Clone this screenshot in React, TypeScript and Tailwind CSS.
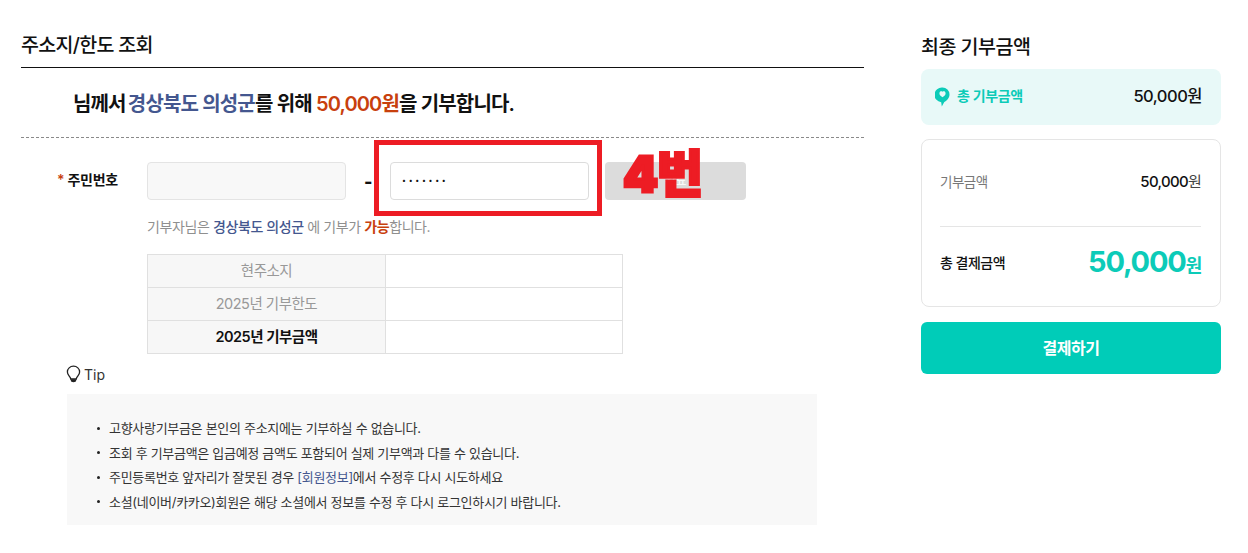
export default function App() {
  const font = { fontFamily: 'Inter, "Noto Sans CJK KR", sans-serif' };
  return (
    <div style={font} className="w-[1248px] h-[553px] bg-white overflow-hidden flex items-start pl-[21px] text-[#111] tracking-[-0.5px]">
      <main className="w-[843px] flex flex-col">
        <h2 className="h-[68px] pt-[32px] text-[19.5px] leading-[26px] font-medium tracking-[-0.7px] border-b border-[#111]">주소지/한도 조회</h2>
        <p className="h-[70px] border-b border-dashed border-[#8a8a8a] pl-[52px] flex items-center text-[20px] tracking-[-0.85px] font-semibold pt-[2px]">
          <span className="mr-[-2px]">님께서&nbsp;</span><span className="text-[#44578f]">경상북도 의성군</span><span>를 위해&nbsp;</span><span className="text-[#c8400d]">50,000원</span><span>을 기부합니다.</span>
        </p>
        <section className="relative flex items-center h-[38px] mt-[24px]">
          <label className="w-[126px] pl-[36px] pb-[4px] text-[14px] font-semibold tracking-[-0.3px]"><span className="text-[#c8400d]">* </span>주민번호</label>
          <div className="w-[199px] h-[38px] rounded-[4px] border border-[#e4e4e4] bg-[#f8f8f8]" />
          <span className="w-[44px] text-center font-extrabold text-[18px]">-</span>
          <div className="w-[199px] h-[38px] rounded-[4px] border border-[#dcdcdc] bg-white flex items-center pl-[11px] text-[7px] tracking-[2.7px]">•••••••</div>
          <button className="ml-[16px] w-[141px] h-[38px] rounded-[4px] bg-[#dcdcdc] text-white text-[12px]">완료</button>
          <div className="absolute left-[353px] top-[-22px] w-[228px] h-[76px] border-[5px] border-[#ed1c24]" />
          <div className="absolute left-[602px] top-[-20px] text-[50px] leading-[64px] font-black text-[#ed1c24] tracking-[-1px]" style={{ WebkitTextStroke: '3px #ed1c24' }}>4번</div>
        </section>
        <p className="ml-[126px] mt-[17px] text-[14px] leading-[20px] text-[#8f8f8f] tracking-[-0.4px]">
          기부자님은 <span className="text-[#44578f] font-medium">경상북도 의성군</span> 에 기부가 <span className="text-[#c8400d] font-semibold">가능</span>합니다.
        </p>
        <table className="ml-[126px] mt-[17px] w-[476px] border-collapse text-[14.5px] table-fixed">
          <tbody>
            {[['현주소지', 'text-[#999] font-normal'], ['2025년 기부한도', 'text-[#999] font-normal'], ['2025년 기부금액', 'text-[#111] font-semibold']].map(([t, c]) => (
              <tr key={t} className="h-[33px]">
                <th className={`w-[238px] bg-[#f7f7f7] border border-[#e0e0e0] ${c}`}>{t}</th>
                <td className="border border-[#e0e0e0]" />
              </tr>
            ))}
          </tbody>
        </table>
        <div className="ml-[45px] mt-[10px] h-[20px] flex items-center gap-[3px] text-[14px] text-[#333] tracking-normal">
          <svg width="15" height="18" viewBox="0 0 15 18" fill="none">
            <path d="M7.5 1.2C4 1.2 1.4 3.7 1.4 6.9c0 2.4 1.6 3.7 2.7 5.4.4.7.5 1.2.6 1.7h5.6c.1-.5.2-1 .6-1.7 1.1-1.7 2.7-3 2.7-5.4 0-3.2-2.6-5.7-6.1-5.7Z" stroke="#222" strokeWidth="1.3" />
            <path d="M4.8 14.2h5.4v1.4c0 .9-1.2 1.6-2.7 1.6s-2.7-.7-2.7-1.6Z" fill="#222" />
          </svg>
          Tip
        </div>
        <ul className="ml-[46px] mt-[10px] w-[750px] h-[131px] bg-[#f8f8f8] pl-[30px] pt-[22px] text-[13px] leading-[24.5px] text-[#333] tracking-[-0.3px] list-none">
          {[
            <>고향사랑기부금은 본인의 주소지에는 기부하실 수 없습니다.</>,
            <>조회 후 기부금액은 입금예정 금액도 포함되어 실제 기부액과 다를 수 있습니다.</>,
            <>주민등록번호 앞자리가 잘못된 경우 <span className="text-[#44578f]">[회원정보]</span>에서 수정후 다시 시도하세요</>,
            <>소셜(네이버/카카오)회원은 해당 소셜에서 정보를 수정 후 다시 로그인하시기 바랍니다.</>,
          ].map((n, i) => (
            <li key={i} className="flex items-center gap-[9px]"><span className="w-[3px] h-[3px] rounded-full bg-[#222]" /><span>{n}</span></li>
          ))}
        </ul>
      </main>
      <aside className="ml-[57px] w-[300px] flex flex-col pt-[35px]">
        <h3 className="text-[19.5px] leading-[24px] font-medium">최종 기부금액</h3>
        <div className="mt-[10px] h-[56px] rounded-[8px] bg-[#e8f9f8] px-[14px] pr-[19px] flex items-center justify-between">
          <span className="flex items-center gap-[7px] text-[14px] font-semibold text-[#0ccbb8]">
            <svg width="15" height="20" viewBox="0 0 15 20"><path fillRule="evenodd" d="M7.5.5a7 7 0 0 1 7 7c0 3.6-2.6 6-5.2 7.6L6.8 19.5l-.6-4.3A7 7 0 0 1 7.5.5Zm0 4.3c-1-.9-3.1-.5-3.1 1.6 0 1.7 1.9 3 3.1 3.8 1.2-.8 3.1-2.1 3.1-3.8 0-2.1-2.1-2.5-3.1-1.6Z" fill="#0ccbb8" /></svg>
            <span className="pb-[4px] tracking-[-0.35px]">총 기부금액</span>
          </span>
          <span className="text-[16.5px] font-medium pb-[2px]">50,000원</span>
        </div>
        <div className="mt-[14px] h-[168px] rounded-[8px] border border-[#e5e5e5] pl-[18px] pr-[19px] flex flex-col">
          <div className="h-[87px] border-b border-[#e5e5e5] flex items-center justify-between pb-[2px]">
            <span className="text-[13.5px] text-[#777]">기부금액</span>
            <span className="text-[15px] tracking-[-0.7px] font-medium">50,000<span className="font-normal text-[#444]">원</span></span>
          </div>
          <div className="flex-1 flex items-center justify-between pb-[6px]">
            <span className="text-[14px] font-medium pb-[2px]">총 결제금액</span>
            <span className="text-[#0ccbb8] font-bold text-[29px] leading-[36px] tracking-[-1.2px]">50,000<span className="text-[18px]">원</span></span>
          </div>
        </div>
        <button className="mt-[15px] h-[52px] rounded-[6px] bg-[#00ccb8] text-white text-[16px] font-semibold">결제하기</button>
      </aside>
    </div>
  );
}
